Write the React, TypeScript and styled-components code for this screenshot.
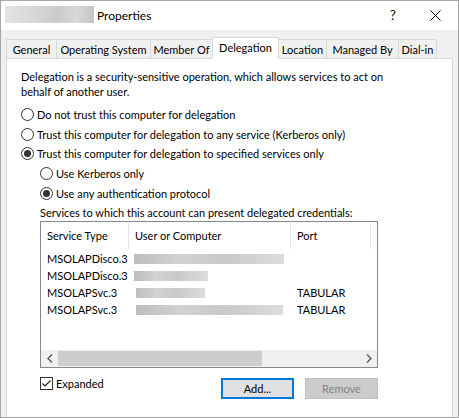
import React from "react";
import styled, { createGlobalStyle } from "styled-components";

const GlobalStyle = createGlobalStyle`
  html, body {
    margin: 0;
    padding: 0;
    background: #ffffff;
  }
  * {
    box-sizing: border-box;
  }
`;

const tabs = [
  { label: "General", width: 51 },
  { label: "Operating System", width: 95 },
  { label: "Member Of", width: 63 },
  { label: "Delegation", width: 67, active: true },
  { label: "Location", width: 49 },
  { label: "Managed By", width: 73 },
  { label: "Dial-in", width: 39 },
];

const rows = [
  { type: "MSOLAPDisco.3", blur: 150, offset: -1, port: "" },
  { type: "MSOLAPDisco.3", blur: 74, offset: -1, port: "" },
  { type: "MSOLAPSvc.3", blur: 69, offset: 1, port: "TABULAR" },
  { type: "MSOLAPSvc.3", blur: 147, offset: 1, port: "TABULAR" },
];

const App: React.FC = () => (
  <>
    <GlobalStyle />
    <Window>
      <TitleBar>
        <TitleBlur />
        <TitleText>Properties</TitleText>
        <Spacer />
        <HelpButton>?</HelpButton>
        <CloseButton>
          <svg width="11" height="11" viewBox="0 0 11 11">
            <path d="M0.5 0.5 L10.5 10.5 M10.5 0.5 L0.5 10.5" stroke="#000" strokeWidth="1" />
          </svg>
        </CloseButton>
      </TitleBar>

      <Body>
        <TabStrip>
          {tabs.map((t) => (
            <Tab key={t.label} $active={!!t.active} $width={t.width}>
              {t.label}
            </Tab>
          ))}
        </TabStrip>

        <Panel>
          <Description>
            Delegation is a security-sensitive operation, which allows services to act on
            <br />
            behalf of another user.
          </Description>

          <RadioGroup>
            <RadioRow>
              <Radio />
              <span>Do not trust this computer for delegation</span>
            </RadioRow>
            <RadioRow>
              <Radio />
              <span>Trust this computer for delegation to any service (Kerberos only)</span>
            </RadioRow>
            <RadioRow>
              <Radio $checked />
              <span>Trust this computer for delegation to specified services only</span>
            </RadioRow>
            <RadioRow $indent>
              <Radio />
              <span>Use Kerberos only</span>
            </RadioRow>
            <RadioRow $indent>
              <Radio $checked />
              <span>Use any authentication protocol</span>
            </RadioRow>
          </RadioGroup>

          <Indented>
            <ListCaption>Services to which this account can present delegated credentials:</ListCaption>
            <ListBox>
              <HeaderRow>
                <HeaderCell $width={88}>Service Type</HeaderCell>
                <HeaderCell $width={162}>User or Computer</HeaderCell>
                <HeaderCell $width={80}>Port</HeaderCell>
              </HeaderRow>
              <Rows>
                {rows.map((r, i) => (
                  <Row key={i}>
                    <Cell $width={88}>{r.type}</Cell>
                    <Cell $width={162}>
                      <Blur style={{ width: r.blur, marginLeft: r.offset }} />
                    </Cell>
                    <Cell $width={80}>{r.port}</Cell>
                  </Row>
                ))}
              </Rows>
              <ScrollBar>
                <Arrow>
                  <svg width="6" height="9" viewBox="0 0 6 9">
                    <path d="M5 0.5 L1 4.5 L5 8.5" fill="none" stroke="#606060" strokeWidth="1.5" />
                  </svg>
                </Arrow>
                <Track>
                  <Thumb />
                </Track>
                <Arrow>
                  <svg width="6" height="9" viewBox="0 0 6 9">
                    <path d="M1 0.5 L5 4.5 L1 8.5" fill="none" stroke="#606060" strokeWidth="1.5" />
                  </svg>
                </Arrow>
              </ScrollBar>
            </ListBox>

            <BottomRow>
              <CheckRow>
                <CheckBox>
                  <svg width="11" height="11" viewBox="0 0 11 11">
                    <path d="M1.5 5.5 L4 8 L9.5 2.5" fill="none" stroke="#222" strokeWidth="1.2" />
                  </svg>
                </CheckBox>
                <span>Expanded</span>
              </CheckRow>
              <Spacer />
              <Button $primary>Add...</Button>
              <Button $disabled>Remove</Button>
            </BottomRow>
          </Indented>
        </Panel>
      </Body>
    </Window>
  </>
);

export default App;

// Styled Components
const Window = styled.div`
  width: 459px;
  height: 418px;
  border: 1px solid #a6a6a6;
  display: flex;
  flex-direction: column;
  font-family: Lato, "Liberation Sans", Arial, sans-serif;
  font-size: 11px;
  color: #000;
  background: #f0f0f0;
  overflow: hidden;
`;

const TitleBar = styled.div`
  height: 29px;
  background: #ffffff;
  display: flex;
  align-items: center;
  padding-left: 4px;
`;

const TitleBlur = styled.div`
  width: 89px;
  height: 17px;
  margin-top: -2px;
  background: linear-gradient(90deg, #e4e4e4 0%, #d6d6d6 35%, #cbcbcb 60%, #d8d8d8 80%, #c6c6c6 100%);
  filter: blur(0.6px);
`;

const TitleText = styled.span`
  margin-left: 3px;
  font-size: 12px;
  margin-top: -1px;
`;

const Spacer = styled.div`
  flex: 1;
`;

const HelpButton = styled.span`
  width: 46px;
  text-align: center;
  font-size: 13px;
  margin-right: -4px;
  margin-top: -1px;
`;

const CloseButton = styled.span`
  width: 46px;
  display: flex;
  justify-content: center;
  margin-top: -1px;
`;

const Body = styled.div`
  flex: 1;
  display: flex;
  flex-direction: column;
  padding: 7px 5px 0 5px;
`;

const TabStrip = styled.div`
  display: flex;
  align-items: flex-end;
  height: 22px;
  position: relative;
  z-index: 1;
  margin-bottom: -1px;
`;

const Tab = styled.div<{ $active: boolean; $width: number }>`
  flex-shrink: 0;
  width: ${(p) => p.$width}px;
  height: ${(p) => (p.$active ? 22 : 20)}px;
  display: flex;
  align-items: center;
  justify-content: center;
  white-space: nowrap;
  border: 1px solid #d9d9d9;
  border-bottom: ${(p) => (p.$active ? "1px solid #ffffff" : "1px solid #d9d9d9")};
  margin-right: -1px;
  background: ${(p) => (p.$active ? "#ffffff" : "#f0f0f0")};
  padding-bottom: ${(p) => (p.$active ? "2px" : "0")};
  position: relative;
  z-index: ${(p) => (p.$active ? 2 : 1)};
`;

const Panel = styled.div`
  flex: 1;
  width: 447px;
  background: #ffffff;
  border: 1px solid #d9d9d9;
  border-bottom: none;
  padding: 10px 14px 0 14px;
  display: flex;
  flex-direction: column;
`;

const Description = styled.div`
  line-height: 15px;
  white-space: nowrap;
`;

const RadioGroup = styled.div`
  display: flex;
  flex-direction: column;
  margin-top: 6px;
`;

const RadioRow = styled.label<{ $indent?: boolean }>`
  display: flex;
  align-items: center;
  height: 19.6px;
  gap: 3px;
  padding-left: ${(p) => (p.$indent ? "19px" : "0")};
  white-space: nowrap;
`;

const Radio = styled.span<{ $checked?: boolean }>`
  width: 13px;
  height: 13px;
  border-radius: 50%;
  border: 1px solid #333333;
  background: #ffffff;
  display: inline-flex;
  align-items: center;
  justify-content: center;
  flex-shrink: 0;
  &::after {
    content: "";
    width: 7px;
    height: 7px;
    border-radius: 50%;
    background: ${(p) => (p.$checked ? "#333333" : "transparent")};
  }
`;

const Indented = styled.div`
  padding-left: 19px;
  width: 357px;
  display: flex;
  flex-direction: column;
`;

const ListCaption = styled.div`
  margin-top: 2px;
  height: 15px;
  line-height: 15px;
  white-space: nowrap;
`;

const ListBox = styled.div`
  margin-top: 1px;
  width: 338px;
  height: 147px;
  border: 1px solid #828790;
  display: flex;
  flex-direction: column;
`;

const HeaderRow = styled.div`
  display: flex;
  height: 28px;
`;

const HeaderCell = styled.div<{ $width: number }>`
  width: ${(p) => p.$width}px;
  padding: 0 6px;
  display: flex;
  align-items: center;
  border-right: 1px solid #e5e5e5;
  height: 26px;
  margin-top: 1px;
  white-space: nowrap;
`;

const Rows = styled.div`
  flex: 1;
  display: flex;
  flex-direction: column;
`;

const Row = styled.div`
  display: flex;
  height: 17px;
  align-items: center;
`;

const Cell = styled.div<{ $width: number }>`
  width: ${(p) => p.$width}px;
  padding: 0 6px;
  white-space: nowrap;
  display: flex;
  align-items: center;
`;

const Blur = styled.div`
  height: 10px;
  margin-top: 1px;
  background: linear-gradient(90deg, #bdbdbd 0%, #d2d2d2 30%, #c9c9c9 60%, #dcdcdc 100%);
  filter: blur(0.5px);
`;

const ScrollBar = styled.div`
  height: 17px;
  display: flex;
  background: #f0f0f0;
`;

const Arrow = styled.div`
  width: 17px;
  display: flex;
  align-items: center;
  justify-content: center;
`;

const Track = styled.div`
  flex: 1;
  display: flex;
  align-items: stretch;
  padding: 1px 0;
`;

const Thumb = styled.div`
  width: 204px;
  background: #cdcdcd;
`;

const BottomRow = styled.div`
  display: flex;
  align-items: flex-start;
  margin-top: 8px;
`;

const CheckRow = styled.label`
  display: flex;
  align-items: center;
  gap: 3px;
  height: 14px;
  margin-top: 1px;
`;

const CheckBox = styled.span`
  width: 13px;
  height: 13px;
  border: 1px solid #333333;
  background: #ffffff;
  display: inline-flex;
  align-items: center;
  justify-content: center;
`;

const Button = styled.div<{ $primary?: boolean; $disabled?: boolean }>`
  width: 73px;
  height: 21px;
  margin-top: 2px;
  margin-left: ${(p) => (p.$disabled ? "11px" : "0")};
  display: flex;
  align-items: center;
  justify-content: center;
  background: ${(p) => (p.$disabled ? "#cccccc" : "#e1e1e1")};
  color: ${(p) => (p.$disabled ? "#838383" : "#000000")};
  border: ${(p) => (p.$primary ? "2px solid #0078d7" : "1px solid #bfbfbf")};
`;
